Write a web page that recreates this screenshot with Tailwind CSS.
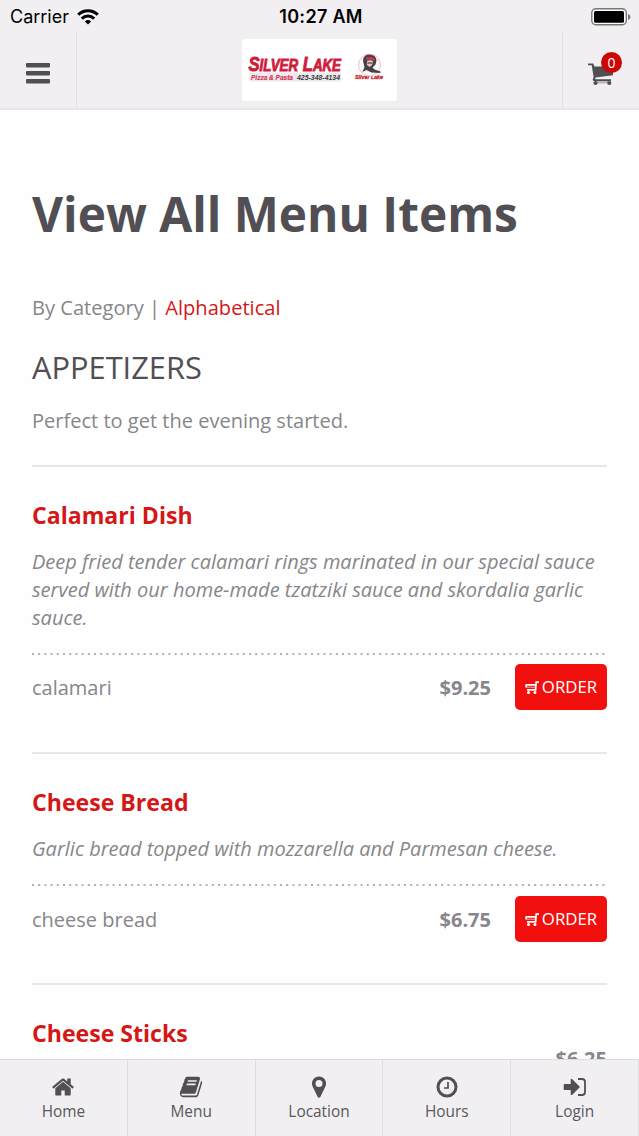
<!DOCTYPE html>
<html lang="en">
  <head>
    <meta charset="UTF-8" />
    <meta name="viewport" content="width=device-width, initial-scale=1.0" />
    <title>View All Menu Items</title>
    <script src="https://cdn.jsdelivr.net/npm/@tailwindcss/browser@4"></script>
  </head>
  <body class="flex flex-col h-screen overflow-hidden bg-[#fefefe] font-['Open_Sans',sans-serif] text-[20px] leading-7 text-[#87868a]">
    <!-- Status bar and header -->
    <header class="shrink-0 h-[110px] bg-[#f1eff2] border-b-2 border-[#e8e7e9]">
      <div class="grid grid-cols-3 items-center h-8 pl-[10px] pr-2 font-['Inter',sans-serif] text-black">
        <div class="flex items-center gap-2 text-[18px] leading-8">
          <span>Carrier</span>
          <svg class="w-[22px] h-4" viewBox="0 0 22 16" fill="none" stroke="#000" stroke-width="3">
            <path d="M1.2 5.8a14 14 0 0 1 19.6 0" />
            <path d="M4.8 9.6a9 9 0 0 1 12.4 0" />
            <path d="M11 15.6l-3.1-3.2a4.5 4.5 0 0 1 6.2 0z" fill="#000" stroke="none" />
          </svg>
        </div>
        <div class="pt-px pl-px text-center text-[18px] leading-8 font-semibold tracking-[0.3px] whitespace-nowrap">10:27 AM</div>
        <svg class="w-10 h-[18px] justify-self-end" viewBox="0 0 40 18">
          <rect x="0.8" y="0.8" width="34.5" height="16" rx="4" fill="#fff" stroke="#77767a" stroke-width="1.4" />
          <rect x="3" y="3" width="30" height="11.8" rx="1.5" fill="#000" />
          <path d="M37 6q2.5 1 2.5 3t-2.5 3z" fill="#77767a" />
        </svg>
      </div>
      <div class="flex h-[76px]">
        <button class="flex items-center justify-center w-[77px] pt-[7px] border-r border-[#e2e0e3]">
          <svg class="w-6 h-[21px]" viewBox="0 0 24 21" fill="#504f53">
            <rect width="24" height="4.6" rx="1" />
            <rect y="8" width="24" height="4.6" rx="1" />
            <rect y="16" width="24" height="4.6" rx="1" />
          </svg>
        </button>
        <div class="flex justify-center flex-1 pt-[7px]">
          <!-- Silver Lake logo -->
          <svg class="w-[155px] h-[62px]" viewBox="0 0 155 62">
            <rect width="155" height="62" rx="2" fill="#fff" />
            <rect x="7" y="33.5" width="92" height="9" fill="#eceaec" />
            <g font-family="Liberation Sans, Arial, sans-serif" font-weight="bold" font-style="italic">
              <text x="6.5" y="31.5" font-size="20" fill="#cf1c3c" stroke="#cf1c3c" stroke-width="0.9" textLength="92.5" lengthAdjust="spacingAndGlyphs">S<tspan font-size="16">ILVER</tspan> L<tspan font-size="16">AKE</tspan></text>
              <text x="9" y="40.5" font-size="7" fill="#d63a5d" stroke="#d63a5d" stroke-width="0.2" textLength="42" lengthAdjust="spacingAndGlyphs">Pizza &amp; Pasta</text>
              <text x="55" y="40.8" font-size="7.5" fill="#3c3a44" textLength="43" lengthAdjust="spacingAndGlyphs">425-348-4134</text>
              <text x="113" y="39.5" font-size="5.5" fill="#c7262e" stroke="#c7262e" stroke-width="0.3" textLength="28" lengthAdjust="spacingAndGlyphs">Silver Lake</text>
            </g>
            <circle cx="127.5" cy="26" r="11" fill="#fdf6f6" stroke="#efc3c8" stroke-width="1" />
            <path d="M121 22q0-6 6-6.500 7 0 7.500 6l-1 4-3 3 2 2 6 2v1.500l-9-.5-5-2.500-4 2 2-5z" fill="#454144" />
            <path d="M125 22q3-1.500 6 0l-1 4-2.500 2-2.500-2z" fill="#ecc4c6" />
            <path d="M124 18.500q5-2 9 1.500l-1 2q-4-2-8-1z" fill="#c23a4b" />
            <path d="M125.500 24h4.500" stroke="#292528" stroke-width="1" />
          </svg>
        </div>
        <button class="relative w-[77px] border-l border-[#e2e0e3]">
          <svg class="absolute left-[25px] top-[31px] w-[26px] h-[24px]" viewBox="0 0 26 24" fill="#504f53">
            <path d="M0 .5h5.200l1.300 3H25v8.800L7.500 14.500l-.3 1.800H23v1.600H5.300l-.7-1.300 1-2.500L3.700 2.300H0z" />
            <circle cx="7.500" cy="20" r="2.100" />
            <circle cx="21.300" cy="20" r="2.100" />
            <path d="M7 17h15v3.500H7z" opacity="0.35" />
          </svg>
          <span class="absolute left-[38px] top-[20px] flex items-center justify-center size-[21px] rounded-full bg-[#cb0606] text-[14px] leading-none text-white">0</span>
        </button>
      </div>
    </header>

    <main class="flex-1 min-h-0 overflow-hidden px-8">
      <h1 class="mt-[69px] text-[47.8px] leading-[70px] font-bold text-[#514f53] whitespace-nowrap">View All Menu Items</h1>
      <p class="mt-[45px] text-[20.1px]">By Category | <a href="#" class="text-[#d41717]">Alphabetical</a></p>
      <h2 class="mt-[25px] text-[30.8px] leading-[40px] text-[#514f53]">APPETIZERS</h2>
      <p class="mt-5 text-[20.05px]">Perfect to get the evening started.</p>

      <section class="mt-[30px] h-[287px] border-t-2 border-[#e7e7e8]">
        <h3 class="pt-8 text-[23.1px] leading-8 font-bold text-[#d41717]">Calamari Dish</h3>
        <p class="mt-[17px] italic whitespace-nowrap">Deep fried tender calamari rings marinated in our special sauce<br />served with our home-made tzatziki sauce and skordalia garlic<br />sauce.</p>
        <svg class="block w-full h-0.5 mt-[21px]"><line x1="0" y1="1" x2="575" y2="1" stroke="#b1b0b3" stroke-width="2" stroke-dasharray="2 4.2" /></svg>
        <div class="flex items-center mt-[9px] h-[46px]">
          <span class="flex-1 pt-0.5">calamari</span>
          <span class="mr-6 pt-0.5 font-bold">$9.25</span>
          <button class="flex items-center justify-center gap-[3px] w-[92px] h-[46px] rounded-[5px] bg-[#f1100d] text-[16.8px] text-white">
            <svg class="w-[14px] h-[13px]" viewBox="0 0 14 13" fill="none" stroke="#fff" stroke-width="1.7">
              <path d="M14 1.200h-2.800l-.6 7.600H2M11 3.800H1.200v2.600" />
              <path d="M2 6.300h8.500" stroke-opacity="0.500" stroke-width="1.200" />
              <circle cx="3.500" cy="11.500" r=".7" fill="#fff" />
              <circle cx="10" cy="11.500" r=".7" fill="#fff" />
            </svg>
            <span>ORDER</span>
          </button>
        </div>
      </section>

      <section class="h-[231px] border-t-2 border-[#e7e7e8]">
        <h3 class="pt-8 text-[23.1px] leading-8 font-bold text-[#d41717]">Cheese Bread</h3>
        <p class="mt-[17px] italic whitespace-nowrap">Garlic bread topped with mozzarella and Parmesan cheese.</p>
        <svg class="block w-full h-0.5 mt-[21px]"><line x1="0" y1="1" x2="575" y2="1" stroke="#b1b0b3" stroke-width="2" stroke-dasharray="2 4.2" /></svg>
        <div class="flex items-center mt-[10px] h-[46px]">
          <span class="flex-1 pt-px">cheese bread</span>
          <span class="mr-6 pt-px font-bold">$6.75</span>
          <button class="flex items-center justify-center gap-[3px] w-[92px] h-[46px] rounded-[5px] bg-[#f1100d] text-[16.8px] text-white">
            <svg class="w-[14px] h-[13px]" viewBox="0 0 14 13" fill="none" stroke="#fff" stroke-width="1.7">
              <path d="M14 1.200h-2.800l-.6 7.600H2M11 3.800H1.200v2.600" />
              <path d="M2 6.300h8.500" stroke-opacity="0.500" stroke-width="1.200" />
              <circle cx="3.500" cy="11.500" r=".7" fill="#fff" />
              <circle cx="10" cy="11.500" r=".7" fill="#fff" />
            </svg>
            <span>ORDER</span>
          </button>
        </div>
      </section>

      <section class="border-t-2 border-[#e7e7e8]">
        <h3 class="pt-8 text-[23.1px] leading-8 font-bold text-[#d41717]">Cheese Sticks</h3>
        <div class="-mt-1 text-right font-bold">$6.25</div>
      </section>
    </main>

    <!-- Bottom tabs -->
    <nav class="shrink-0 grid grid-cols-5 h-[77px] bg-[#f1eff2] border-t border-[#dddcde] text-[15.4px] leading-5 text-[#59585c]">
      <a href="#" class="flex flex-col items-center pt-[15px] gap-[3px] border-r border-[#dddcde]">
        <svg class="w-6 h-6" viewBox="0 0 1664 1792" fill="#504f53">
          <path d="M1408 992v480q0 26-19 45t-45 19h-384v-384h-256v384h-384q-26 0-45-19t-19-45v-480q0-1 .5-3t.5-3l575-474 575 474q1 2 1 6zm223-69l-62 74q-8 9-21 11h-3q-13 0-21-7l-692-577-692 577q-12 8-24 7-13-2-21-11l-62-74q-8-10-7-23.500t11-21.500l719-599q32-26 76-26t76 26l244 204v-195q0-14 9-23t23-9h192q14 0 23 9t9 23v408l219 182q10 8 11 21.500t-7 23.500z" />
        </svg>
        <span>Home</span>
      </a>
      <a href="#" class="flex flex-col items-center pt-[15px] gap-[3px] border-r border-[#dddcde]">
        <svg class="w-6 h-6" viewBox="0 0 1664 1792" fill="#504f53">
          <path d="M1639 478q40 57 18 129l-275 906q-19 64-76.500 107.500t-122.500 43.500h-923q-77 0-148.500-53.500t-99.500-131.500q-24-67-2-127 0-4 3-27t4-37q1-8-3-21.500t-3-19.500q2-11 8-21t16.500-23.500 16.500-23.500q23-38 45-91.500t30-91.500q3-10 .5-30t-.5-28q3-11 17-28t17-23q21-36 42-92t25-90q1-9-2.500-32t.5-28q4-13 22-30.500t22-22.500q19-26 42.500-84.500t27.500-96.500q1-8-3-25.500t-2-26.500q2-8 9-18t18-23 17-21q8-12 16.500-30.500t15-35 16-36 19.500-32 26.500-23.500 36-11.500 47.500 5.500l-1 3q38-9 51-9h761q74 0 114 56t18 130l-274 906q-36 119-71.500 153.500t-128.500 34.500h-869q-27 0-38 15-11 16-1 43 24 70 144 70h923q29 0 56-15.500t35-41.500l300-987q7-22 5-57 38 15 59 43zm-1064 2q-4 13 2 22.500t20 9.500h608q13 0 25.500-9.500t16.500-22.500l21-64q4-13-2-22.500t-20-9.500h-608q-13 0-25.500 9.500t-16.500 22.500zm-83 256q-4 13 2 22.500t20 9.500h608q13 0 25.500-9.500t16.500-22.500l21-64q4-13-2-22.500t-20-9.500h-608q-13 0-25.500 9.500t-16.500 22.500z" />
        </svg>
        <span>Menu</span>
      </a>
      <a href="#" class="flex flex-col items-center pt-[15px] gap-[3px] border-r border-[#dddcde]">
        <svg class="w-6 h-6" viewBox="0 0 24 24" fill="#504f53">
          <path fill-rule="evenodd" d="M12 1.500a7 7 0 0 1 6.500 9.700l-5.200 10.700q-1.300 1.600-2.600 0L5.500 11.200A7 7 0 0 1 12 1.500zm0 3.500a3.500 3.500 0 1 0 0 7 3.500 3.500 0 0 0 0-7z" />
        </svg>
        <span>Location</span>
      </a>
      <a href="#" class="flex flex-col items-center pt-[15px] gap-[3px] border-r border-[#dddcde]">
        <svg class="w-6 h-6" viewBox="0 0 24 24" fill="none" stroke="#504f53">
          <circle cx="12" cy="12" r="9" stroke-width="3" />
          <path d="M13 7v6H9" stroke-width="1.7" />
        </svg>
        <span>Hours</span>
      </a>
      <a href="#" class="flex flex-col items-center pt-[15px] gap-[3px] border-r border-[#dddcde]">
        <svg class="w-6 h-6" viewBox="0 0 24 24">
          <path d="M1.500 9h6.200V4.800q.2-1.600 1.600-.6l7.200 7.300q.5.500 0 1l-7.200 7.300q-1.400.8-1.600-.6V15H1.500q-.8 0-.8-.8V9.800q0-.8.8-.8z" fill="#504f53" />
          <path d="M15 4h4q3 0 3 3v10q0 3-3 3h-4" fill="none" stroke="#504f53" stroke-width="1.8" />
        </svg>
        <span>Login</span>
      </a>
    </nav>
  </body>
</html>
